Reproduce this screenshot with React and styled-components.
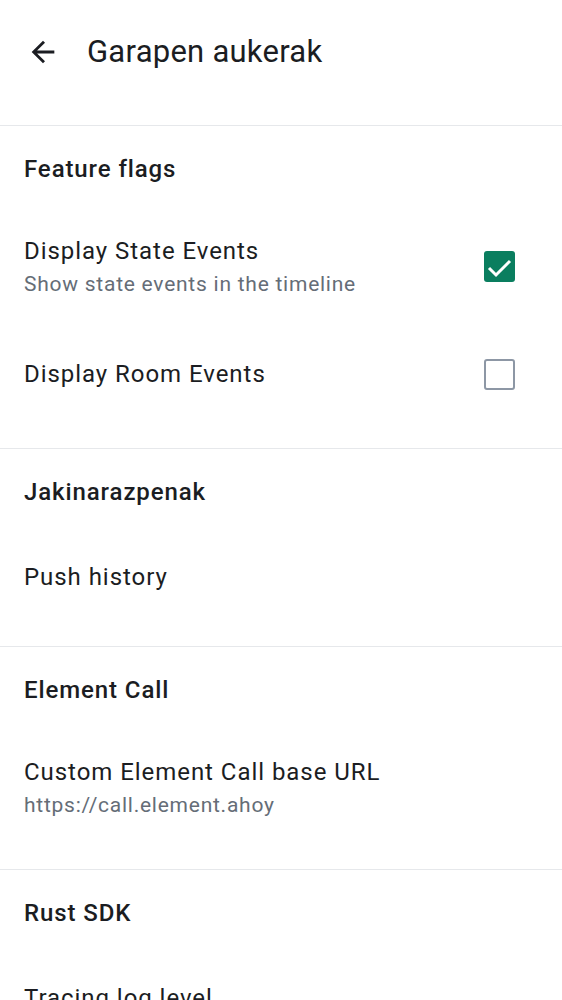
import React from 'react'
import styled, { createGlobalStyle } from 'styled-components'

const TEXT_PRIMARY = '#1b1d22'
const TEXT_SECONDARY = '#656d77'
const DIVIDER = '#e6e8eb'
const ACCENT = '#0a7e5f'

const GlobalStyle = createGlobalStyle`
  html, body {
    margin: 0;
    padding: 0;
    background: #ffffff;
  }
  body {
    font-family: Roboto, "Noto Sans", "Liberation Sans", sans-serif;
    color: ${TEXT_PRIMARY};
    -webkit-font-smoothing: antialiased;
  }
`

const Screen = styled.div`
  width: 562px;
  height: 1000px;
  overflow: hidden;
  background: #ffffff;
`

const TopBar = styled.header`
  display: flex;
  align-items: center;
  height: 40px;
  padding: 32px 0 53px 26px;
`

const BackButton = styled.button`
  display: flex;
  align-items: center;
  justify-content: center;
  width: 34px;
  height: 34px;
  padding: 0;
  border: none;
  background: none;
  color: ${TEXT_PRIMARY};
  cursor: pointer;
`

const Title = styled.h1`
  margin: 0 0 0 27px;
  font-size: 31px;
  line-height: 40px;
  font-weight: 400;
  letter-spacing: 0.25px;
  color: ${TEXT_PRIMARY};
`

const Section = styled.section`
  border-top: 1px solid ${DIVIDER};
  padding-bottom: 24px;
`

const SectionHeader = styled.h2`
  margin: 0;
  padding: 28px 24px 24px;
  font-size: 24px;
  line-height: 30px;
  font-weight: 500;
  letter-spacing: 0.9px;
  color: ${TEXT_PRIMARY};
`

const Item = styled.div`
  display: flex;
  align-items: center;
  min-height: ${(p) => p.$height}px;
  padding: 0 47px 0 24px;
  box-sizing: border-box;
`

const ItemText = styled.div`
  flex: 1;
  display: flex;
  flex-direction: column;
`

const ItemTitle = styled.div`
  font-size: 24px;
  line-height: 30px;
  letter-spacing: 0.95px;
  color: ${TEXT_PRIMARY};
`

const ItemSubtitle = styled.div`
  margin-top: 5px;
  font-size: 21px;
  line-height: 26px;
  letter-spacing: 0.75px;
  color: ${TEXT_SECONDARY};
`

const CheckBox = styled.span`
  display: flex;
  align-items: center;
  justify-content: center;
  width: 31px;
  height: 31px;
  box-sizing: border-box;
  border-radius: 3px;
  background: ${(p) => (p.$checked ? ACCENT : 'transparent')};
  border: ${(p) => (p.$checked ? 'none' : '2.5px solid #8d97a5')};
`

const BackIcon = () => (
  <svg width="34" height="34" viewBox="0 0 24 24" fill="currentColor">
    <path d="M20 11H7.83l5.59-5.59L12 4l-8 8 8 8 1.41-1.41L7.83 13H20v-2z" />
  </svg>
)

const CheckIcon = () => (
  <svg width="31" height="31" viewBox="0 0 31 31" fill="none">
    <path d="M5 17 L12 24 L26 10" stroke="#ffffff" strokeWidth="3" />
  </svg>
)

const sections = [
  {
    title: 'Feature flags',
    items: [
      { title: 'Display State Events', subtitle: 'Show state events in the timeline', checkbox: true, checked: true },
      { title: 'Display Room Events', checkbox: true, checked: false },
    ],
  },
  {
    title: 'Jakinarazpenak',
    items: [{ title: 'Push history' }],
  },
  {
    title: 'Element Call',
    items: [{ title: 'Custom Element Call base URL', subtitle: 'https://call.element.ahoy' }],
  },
  {
    title: 'Rust SDK',
    items: [{ title: 'Tracing log level' }],
  },
]

const itemHeight = (item) => {
  if (item.subtitle) return 116
  if (item.checkbox) return 100
  return 91
}

export default function App() {
  return (
    <>
      <GlobalStyle />
      <Screen>
        <TopBar>
          <BackButton aria-label="Back">
            <BackIcon />
          </BackButton>
          <Title>Garapen aukerak</Title>
        </TopBar>
        {sections.map((section) => (
          <Section key={section.title}>
            <SectionHeader>{section.title}</SectionHeader>
            {section.items.map((item) => (
              <Item key={item.title} $height={itemHeight(item)}>
                <ItemText>
                  <ItemTitle>{item.title}</ItemTitle>
                  {item.subtitle && <ItemSubtitle>{item.subtitle}</ItemSubtitle>}
                </ItemText>
                {item.checkbox && (
                  <CheckBox $checked={item.checked}>{item.checked && <CheckIcon />}</CheckBox>
                )}
              </Item>
            ))}
          </Section>
        ))}
      </Screen>
    </>
  )
}
